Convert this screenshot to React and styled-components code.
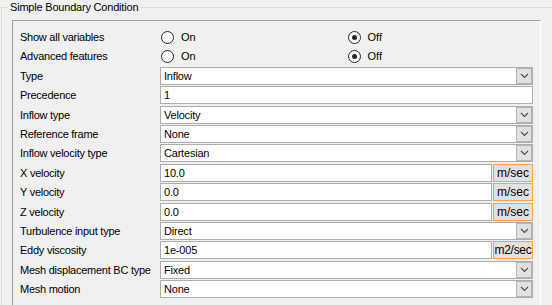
import React from 'react';
import styled, { createGlobalStyle } from 'styled-components';

const GlobalStyle = createGlobalStyle`
  html, body {
    margin: 0;
    background: #f0f0f0;
    overflow: hidden;
  }
  body {
    font-family: "Liberation Sans", Arial, sans-serif;
    font-size: 11px;
    color: #000;
  }
`;

/* the group box runs on past the right and bottom edges of the window */
const Group = styled.fieldset`
  margin: 0 0 0 1px;
  padding: 0;
  width: 551px;
  height: 305px;
  border: 1px solid #dcdcdc;
  border-right: none;
  border-bottom: none;
  box-sizing: border-box;
`;

const Title = styled.legend`
  margin-left: 6px;
  padding: 0 2px;
  font-size: 11px;
  letter-spacing: -0.2px;
  line-height: 14px;
`;

const Panel = styled.div`
  margin: 6px 0 0 10px;
  width: 529px;
  height: 285px;
  box-sizing: border-box;
  border-top: 1px solid #a0a0a0;
  border-left: 1px solid #a0a0a0;
  border-right: 1px solid #ffffff;
  padding: 7px 7px 0;
  overflow: hidden;
`;

const Form = styled.div`
  display: grid;
  grid-template-columns: 140px 373px;
  grid-auto-rows: 18px;
  row-gap: 1.4px;
`;

const Label = styled.div`
  display: flex;
  align-items: center;
  letter-spacing: -0.25px;
  white-space: nowrap;
`;

const RadioGroup = styled.div`
  display: grid;
  grid-template-columns: 1fr 1fr;
  align-items: center;
`;

const RadioOption = styled.div`
  display: flex;
  align-items: center;
  gap: 7px;
  padding-left: 1px;
`;

const Circle = styled.span`
  width: 13px;
  height: 13px;
  box-sizing: border-box;
  border-radius: 50%;
  border: 1px solid #262626;
  background: #fff;
  display: flex;
  align-items: center;
  justify-content: center;
  &::after {
    content: '';
    width: 5px;
    height: 5px;
    border-radius: 50%;
    background: ${p => p.$checked ? '#262626' : 'transparent'};
  }
`;

const FieldRow = styled.div`
  display: flex;
  gap: 1px;
  min-width: 0;
`;

const Box = styled.div`
  flex: 1;
  display: flex;
  align-items: center;
  box-sizing: border-box;
  height: 18px;
  background: #fff;
  border: 1px solid #adadad;
  padding-left: 3px;
  letter-spacing: -0.2px;
  white-space: nowrap;
  overflow: hidden;
`;

const Value = styled.span`
  flex: 1;
`;

const DropButton = styled.span`
  width: 16px;
  height: 16px;
  box-sizing: border-box;
  background: #e1e1e1;
  border: 1px solid #b4b4b4;
  display: flex;
  align-items: center;
  justify-content: center;
`;

const Unit = styled.div`
  width: 40px;
  height: 18px;
  box-sizing: border-box;
  background: #e1e1e1;
  border: 1px solid #f4a447;
  font-size: 12px;
  display: flex;
  align-items: center;
  justify-content: center;
  white-space: nowrap;
  letter-spacing: ${p => p.$tight ? '-0.3px' : '0'};
`;

const Chevron = () => (
  <svg width="9" height="6" viewBox="0 0 9 6">
    <polyline points="1,1 4.5,4.5 8,1" fill="none" stroke="#4a4a4a" strokeWidth="1.1" />
  </svg>
);

const Radio = ({ label, checked }) => (
  <RadioOption>
    <Circle $checked={checked} />
    <span>{label}</span>
  </RadioOption>
);

const rows = [
  { label: 'Show all variables', kind: 'radio', value: 'Off' },
  { label: 'Advanced features', kind: 'radio', value: 'Off' },
  { label: 'Type', kind: 'combo', value: 'Inflow' },
  { label: 'Precedence', kind: 'text', value: '1' },
  { label: 'Inflow type', kind: 'combo', value: 'Velocity' },
  { label: 'Reference frame', kind: 'combo', value: 'None' },
  { label: 'Inflow velocity type', kind: 'combo', value: 'Cartesian' },
  { label: 'X velocity', kind: 'text', value: '10.0', unit: 'm/sec' },
  { label: 'Y velocity', kind: 'text', value: '0.0', unit: 'm/sec' },
  { label: 'Z velocity', kind: 'text', value: '0.0', unit: 'm/sec' },
  { label: 'Turbulence input type', kind: 'combo', value: 'Direct' },
  { label: 'Eddy viscosity', kind: 'text', value: '1e-005', unit: 'm2/sec' },
  { label: 'Mesh displacement BC type', kind: 'combo', value: 'Fixed' },
  { label: 'Mesh motion', kind: 'combo', value: 'None' },
];

const Field = ({ row }) => {
  if (row.kind === 'radio') {
    return (
      <RadioGroup>
        <Radio label="On" checked={row.value === 'On'} />
        <Radio label="Off" checked={row.value === 'Off'} />
      </RadioGroup>
    );
  }
  return (
    <FieldRow>
      <Box>
        <Value>{row.value}</Value>
        {row.kind === 'combo' && (
          <DropButton>
            <Chevron />
          </DropButton>
        )}
      </Box>
      {row.unit && <Unit $tight={row.unit.length > 5}>{row.unit}</Unit>}
    </FieldRow>
  );
};

export default function App() {
  return (
    <>
      <GlobalStyle />
      <Group>
        <Title>Simple Boundary Condition</Title>
        <Panel>
          <Form>
            {rows.map(row => (
              <React.Fragment key={row.label}>
                <Label>{row.label}</Label>
                <Field row={row} />
              </React.Fragment>
            ))}
          </Form>
        </Panel>
      </Group>
    </>
  );
}
